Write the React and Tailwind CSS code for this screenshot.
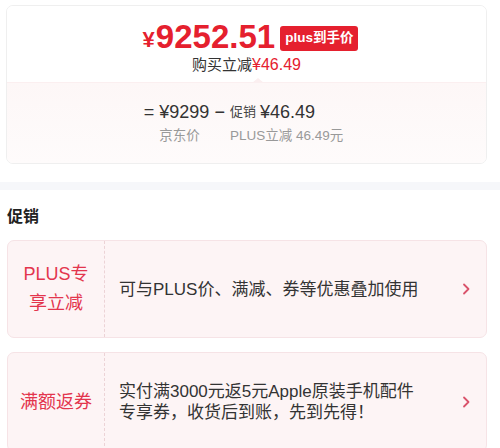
import React from "react";

const font = { fontFamily: '"Liberation Sans", "Noto Sans CJK SC", sans-serif' };

function Chevron() {
  return (
    <svg width="8" height="12" viewBox="0 0 8 12" fill="none" className="shrink-0">
      <path d="M2 1.5 L6.5 6 L2 10.5" stroke="#d9536b" strokeWidth="1.8" strokeLinecap="round" strokeLinejoin="round" />
    </svg>
  );
}

function Promo({ label, children, h }) {
  return (
    <div className={`flex ${h} rounded-[7px] border border-[#f6e3e6] bg-[#fdf4f5]`}>
      <div className="flex w-[97px] shrink-0 items-center justify-center border-r border-dashed border-[#ecd3d6] text-center text-[18px] leading-[29px] text-[#e3354d]">
        {label}
      </div>
      <div className="flex flex-1 items-center justify-between pl-[14px] pr-[16px]">
        <div className="text-[17px] leading-[21px] text-[#333]">{children}</div>
        <Chevron />
      </div>
    </div>
  );
}

export default function App() {
  return (
    <div className="h-[448px] w-[500px] overflow-hidden bg-white" style={font}>
      <div className="pl-[6px] pr-[13px] pt-[5px]">
        <div className="overflow-hidden rounded-[7px] border border-[#efefef]">
          <div className="relative flex h-[76px] flex-col items-center bg-white pt-[13px]">
            <div className="flex items-center pl-[8px]">
              <span className="mt-[6px] text-[22px] font-bold leading-none text-[#e5202e]">¥</span>
              <span className="ml-[1px] text-[33px] font-bold leading-[36px] text-[#e5202e]">9252.51</span>
              <span className="ml-[5px] mt-[2px] flex h-[25px] items-center rounded-[3px] bg-[#e5202e] px-[5px] text-[13.5px] font-bold leading-none text-white">
                plus到手价
              </span>
            </div>
            <div className="text-[15px] leading-[20px] text-[#333]">
              购买立减<span className="text-[16px] text-[#e5202e]">¥46.49</span>
            </div>
            <div className="absolute bottom-[-1px] left-[245px] h-0 w-0 border-x-[6px] border-b-[5px] border-x-transparent border-b-[#fbeff0]" />
          </div>
          <div className="flex h-[81px] justify-center border-t border-[#fbeff0] bg-gradient-to-b from-[#fdf7f7] to-[#fefbfb] pt-[15px]">
            <div className="flex items-start pr-[6px] text-[#333]">
              <span className="text-[18px] leading-[28px]">=</span>
              <div className="ml-[5px] flex flex-col">
                <span className="text-[18px] leading-[28px]">¥9299</span>
                <span className="text-[13.5px] leading-[20px] text-[#999]">京东价</span>
              </div>
              <span className="ml-[5px] text-[18px] leading-[28px]">−</span>
              <div className="ml-[5px] flex flex-col">
                <div className="flex items-center">
                  <span className="text-[13px] leading-[28px] text-[#444]">促销</span>
                  <span className="ml-[4px] text-[18px] leading-[28px]">¥46.49</span>
                </div>
                <span className="text-[13.5px] leading-[20px] text-[#999]">PLUS立减 46.49元</span>
              </div>
            </div>
          </div>
        </div>
      </div>
      <div className="mt-[18px] h-[8px] bg-[#f6f7fa]" />
      <div className="px-[7px] pr-[13px]">
        <div className="mt-[16px] text-[16px] font-bold leading-[22px] text-[#222]">促销</div>
        <div className="mt-[12px] flex flex-col gap-[14px]">
          <Promo label={<>PLUS专<br />享立减</>} h="h-[98px]">
            可与PLUS价、满减、券等优惠叠加使用
          </Promo>
          <Promo label="满额返券" h="h-[100px]">
            实付满3000元返5元Apple原装手机配件<br />专享券，收货后到账，先到先得！
          </Promo>
        </div>
      </div>
    </div>
  );
}
